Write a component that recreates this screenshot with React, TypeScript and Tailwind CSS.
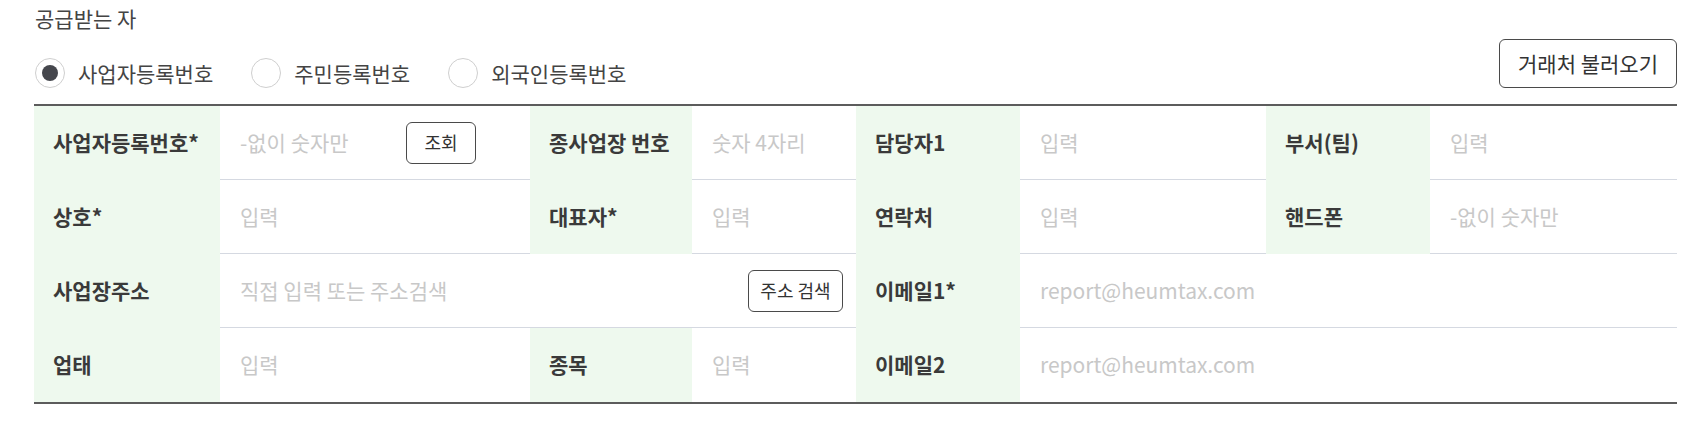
import React from 'react';

const font = { fontFamily: '"Noto Sans CJK KR", "Noto Sans", sans-serif' };

function Radio({ label, checked }: { label: string; checked?: boolean }) {
  return (
    <label className="flex items-center gap-[13px] cursor-pointer">
      <span className="w-[30px] h-[30px] rounded-full border border-[#cfcfcf] flex items-center justify-center bg-white">
        {checked && <span className="w-[16px] h-[16px] rounded-full bg-[#45474d]" />}
      </span>
      <span className="text-[21px] text-[#444] leading-[30px]">{label}</span>
    </label>
  );
}

function Label({ children }: { children: React.ReactNode }) {
  return (
    <div className="bg-[#eef9ee] flex items-center pl-[19px] text-[21px] font-bold text-[#3a3a3a]">
      {children}
    </div>
  );
}

function Field({ placeholder, className = '' }: { placeholder: string; className?: string }) {
  return (
    <div className={`flex items-center pl-[20px] ${className}`}>
      <input
        placeholder={placeholder}
        className="w-full bg-transparent outline-none text-[21px] text-[#333] placeholder:text-[#c8c8c8]"
      />
    </div>
  );
}

function SmallButton({ children, className = '' }: { children: React.ReactNode; className?: string }) {
  return (
    <button className={`h-[42px] shrink-0 rounded-[6px] border border-[#4a4a4a] bg-white text-[18px] text-[#333] ${className}`}>
      {children}
    </button>
  );
}

export default function App() {
  return (
    <div className="bg-white w-[1706px] h-[426px] pt-[4px] pl-[34px] pr-[29px]" style={font}>
      {/* 제목 */}
      <h2 className="h-[28px] leading-[28px] text-[21px] text-[#444] pl-[1px]">공급받는 자</h2>

      {/* 구분 선택 */}
      <div className="mt-[7px] flex items-end justify-between">
        <div className="flex items-center gap-[38px] pl-[1px]">
          <Radio label="사업자등록번호" checked />
          <Radio label="주민등록번호" />
          <Radio label="외국인등록번호" />
        </div>
        <button className="w-[178px] h-[49px] rounded-[6px] border border-[#4a4a4a] bg-white text-[21px] text-[#333]">
          거래처 불러오기
        </button>
      </div>

      {/* 입력 표 */}
      <div className="mt-[16px] border-t-2 border-b-2 border-[#5c5c5c] grid grid-cols-[186px_310px_162px_164px_164px_246px_164px_1fr] auto-rows-[74px]">
        {/* 1행 */}
        <Label>사업자등록번호*</Label>
        <div className="flex items-center pr-[54px] border-b border-[#d5d9e1]">
          <Field placeholder="-없이 숫자만" className="flex-1" />
          <SmallButton className="w-[70px]">조회</SmallButton>
        </div>
        <Label>종사업장 번호</Label>
        <Field placeholder="숫자 4자리" className="border-b border-[#d5d9e1] pl-[18px]" />
        <Label>담당자1</Label>
        <Field placeholder="입력" className="border-b border-[#d5d9e1]" />
        <Label>부서(팀)</Label>
        <Field placeholder="입력" className="border-b border-[#d5d9e1]" />

        {/* 2행 */}
        <Label>상호*</Label>
        <Field placeholder="입력" className="border-b border-[#d5d9e1]" />
        <Label>대표자*</Label>
        <Field placeholder="입력" className="border-b border-[#d5d9e1]" />
        <Label>연락처</Label>
        <Field placeholder="입력" className="border-b border-[#d5d9e1]" />
        <Label>핸드폰</Label>
        <Field placeholder="-없이 숫자만" className="border-b border-[#d5d9e1]" />

        {/* 3행 */}
        <Label>사업장주소</Label>
        <div className="col-span-3 flex items-center pr-[13px] border-b border-[#d5d9e1]">
          <Field placeholder="직접 입력 또는 주소검색" className="flex-1" />
          <SmallButton className="w-[95px]">주소 검색</SmallButton>
        </div>
        <Label>이메일1*</Label>
        <Field placeholder="report@heumtax.com" className="col-span-3 border-b border-[#d5d9e1]" />

        {/* 4행 */}
        <Label>업태</Label>
        <Field placeholder="입력" />
        <Label>종목</Label>
        <Field placeholder="입력" />
        <Label>이메일2</Label>
        <Field placeholder="report@heumtax.com" className="col-span-3" />
      </div>
    </div>
  );
}
